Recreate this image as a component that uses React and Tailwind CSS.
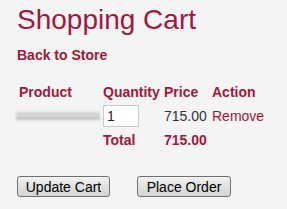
import React, { useState } from 'react';

const ShoppingCart = () => {
  const [qty, setQty] = useState('1');

  return (
    <div className="min-h-screen bg-[#f4f4f4] px-[17px] pt-[2px] font-['Liberation_Sans',Arial,sans-serif]">
      <h1 className="text-[28px] leading-[36px] text-[#a3173a]">Shopping Cart</h1>
      <a className="mt-[8px] block text-[14px] font-bold leading-[18px] text-[#a3173a]" href="#">
        Back to Store
      </a>

      {/* Cart table */}
      <table className="mt-[18px] ml-[-1px] border-collapse text-[14px]">
        <thead>
          <tr className="h-[22px] text-left font-bold text-[#a3173a]">
            <th className="w-[86px] px-[3px] align-top">Product</th>
            <th className="w-[61px] px-[1px] align-top">Quantity</th>
            <th className="w-[48px] px-[1px] align-top">Price</th>
            <th className="px-[1px] align-top">Action</th>
          </tr>
        </thead>
        <tbody>
          <tr className="h-[24px]">
            <td className="p-0">
              <div className="h-[10px] w-[84px] bg-[linear-gradient(to_bottom,#f4f4f4_0%,#c8c8c8_30%,#e6e6e6_50%,#b4b4b4_70%,#f4f4f4_100%)] blur-[1px]" />
            </td>
            <td className="px-[1px]">
              <input
                value={qty}
                onChange={(e) => setQty(e.target.value)}
                className="h-[22px] w-[36px] border border-[#c9c9c9] bg-white px-[3px] text-[14px] text-[#222] outline-none"
              />
            </td>
            <td className="px-[1px] text-[#333]">715.00</td>
            <td className="px-[1px] text-[#a3173a]">Remove</td>
          </tr>
          <tr className="h-[24px] font-bold text-[#a3173a]">
            <td />
            <td className="px-[1px]">Total</td>
            <td className="px-[1px]">715.00</td>
            <td />
          </tr>
        </tbody>
      </table>

      <div className="mt-[24px] flex gap-[27px]">
        <button className="h-[21px] w-[93px] rounded-[3px] border border-[#707070] bg-[linear-gradient(to_bottom,#f2f2f2,#e0e0e0_50%,#d4d4d4)] text-[14px] text-black">
          Update Cart
        </button>
        <button className="h-[21px] w-[94px] rounded-[3px] border border-[#707070] bg-[linear-gradient(to_bottom,#f2f2f2,#e0e0e0_50%,#d4d4d4)] text-[14px] text-black">
          Place Order
        </button>
      </div>
    </div>
  );
};

export default ShoppingCart;
